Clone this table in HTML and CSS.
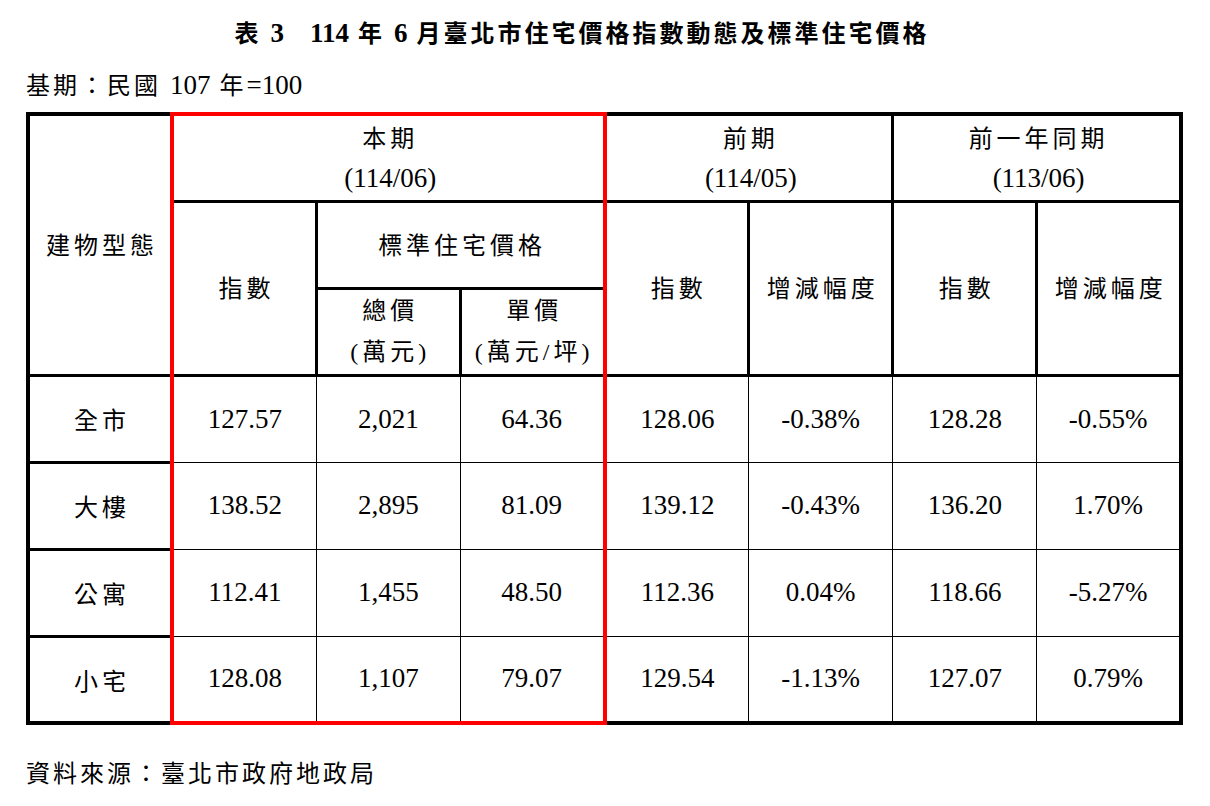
FILE: index.html
```html
<!DOCTYPE html>
<html lang="zh-Hant">
<head>
<meta charset="utf-8">
<title>表3 114年6月臺北市住宅價格指數動態及標準住宅價格</title>
<link rel="stylesheet" href="styles.css">
</head>
<body>
<div class="page">
  <h1 class="title">表 <span class="lt">3</span><span class="gap"></span><span class="lt">114</span> 年 <span class="lt">6</span> 月臺北市住宅價格指數動態及標準住宅價格</h1>
  <p class="base">基期：民國 <span class="lt">107</span> 年<span class="lt">=100</span></p>
  <table class="grid">
    <colgroup>
      <col><col><col><col><col><col><col><col>
    </colgroup>
    <thead>
      <tr class="r1">
        <th rowspan="3" class="hd">建物型態</th>
        <th colspan="3" class="hd rt rl rr">本期<br><span class="lt">(114/06)</span></th>
        <th colspan="2" class="hd">前期<br><span class="lt">(114/05)</span></th>
        <th colspan="2" class="hd">前一年同期<br><span class="lt">(113/06)</span></th>
      </tr>
      <tr class="r2">
        <th rowspan="2" class="hd rl">指數</th>
        <th colspan="2" class="hd rr">標準住宅價格</th>
        <th rowspan="2" class="hd">指數</th>
        <th rowspan="2" class="hd">增減幅度</th>
        <th rowspan="2" class="hd">指數</th>
        <th rowspan="2" class="hd">增減幅度</th>
      </tr>
      <tr class="r3">
        <th class="hd">總價<br>(萬元)</th>
        <th class="hd rr">單價<br>(萬元/坪)</th>
      </tr>
    </thead>
    <tbody>
      <tr>
        <td class="lbl">全市</td>
        <td class="num rl">127.57</td><td class="num">2,021</td><td class="num rr">64.36</td>
        <td class="num">128.06</td><td class="num">-0.38%</td>
        <td class="num">128.28</td><td class="num">-0.55%</td>
      </tr>
      <tr>
        <td class="lbl">大樓</td>
        <td class="num rl">138.52</td><td class="num">2,895</td><td class="num rr">81.09</td>
        <td class="num">139.12</td><td class="num">-0.43%</td>
        <td class="num">136.20</td><td class="num">1.70%</td>
      </tr>
      <tr>
        <td class="lbl">公寓</td>
        <td class="num rl">112.41</td><td class="num">1,455</td><td class="num rr">48.50</td>
        <td class="num">112.36</td><td class="num">0.04%</td>
        <td class="num">118.66</td><td class="num">-5.27%</td>
      </tr>
      <tr>
        <td class="lbl">小宅</td>
        <td class="num rl rb">128.08</td><td class="num rb">1,107</td><td class="num rr rb">79.07</td>
        <td class="num">129.54</td><td class="num">-1.13%</td>
        <td class="num">127.07</td><td class="num">0.79%</td>
      </tr>
    </tbody>
  </table>
  <p class="source">資料來源：臺北市政府地政局</p>
</div>
</body>
</html>
```
FILE: styles.css
```css
* { box-sizing: border-box; }
html, body { margin: 0; padding: 0; background: #fff; }
body {
  font-family: "Liberation Serif", "Noto Sans CJK TC", serif;
  color: #000;
}
.page {
  width: 1210px;
  padding: 15px 0 0 26px;
}
.title {
  margin: 0;
  font-size: 24px;
  font-weight: bold;
  line-height: 36px;
  letter-spacing: 3px;
  text-align: center;
  padding-right: 72px;
}
.title .lt {
  font-size: 27px;
  letter-spacing: 0;
}
.title .gap {
  display: inline-block;
  width: 26px;
}
.base {
  margin: 15px 0 0 0;
  font-size: 24px;
  line-height: 36px;
  letter-spacing: 3px;
}
.base .lt {
  font-size: 27px;
  letter-spacing: 0;
}
.grid {
  margin-top: 8px;
  border-collapse: collapse;
  table-layout: fixed;
  width: 1157px;
  border: 4px solid #000;
}
.grid th, .grid td {
  border: 1px solid #000;
  padding: 0 0 0 4px;
  text-align: center;
  vertical-align: middle;
  font-weight: normal;
}
.grid tr { height: 87px; }
.grid .hd {
  border-width: 3px;
  font-size: 24px;
  line-height: 41px;
  letter-spacing: 4px;
  padding-top: 3px;
}
.grid .r1 .hd { line-height: 39px; }
.grid .r3 .hd { padding-top: 0; }
.grid .hd .lt {
  font-size: 27px;
  letter-spacing: 0;
}
.grid .lbl {
  border-width: 3px;
  font-size: 24px;
  letter-spacing: 4px;
}
.grid .num {
  font-size: 27px;
  padding-left: 0;
}
.grid .rl { border-left: 4px solid #f00; }
.grid .rr { border-right: 4px solid #f00; }
.grid .rt { border-top: 4px solid #f00; }
.grid .rb { border-bottom: 4px solid #f00; }
.source {
  margin: 31px 0 0 0;
  font-size: 24px;
  line-height: 36px;
  letter-spacing: 3px;
}
```
